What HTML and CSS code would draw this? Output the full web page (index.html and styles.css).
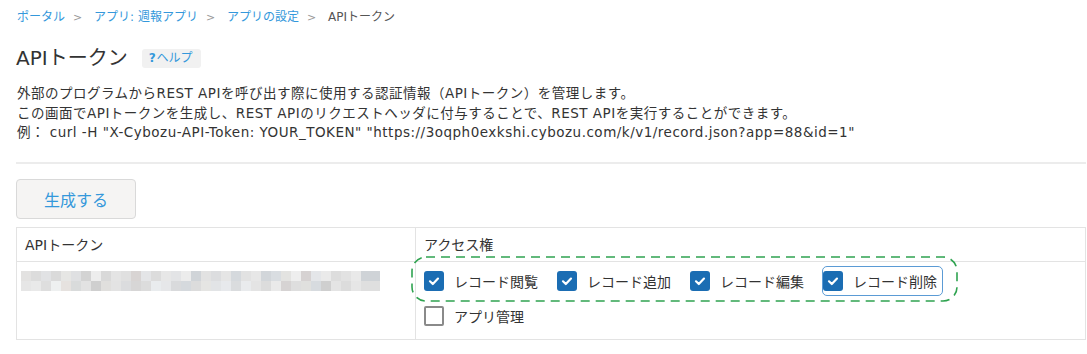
FILE: index.html
```html
<!DOCTYPE html>
<html lang="ja">
<head>
    <meta charset="UTF-8">
    <meta name="viewport" content="width=device-width, initial-scale=1.0">
    <title>APIトークン</title>
    <link rel="stylesheet" href="styles.css">
</head>
<body>
    <div class="page">
        <!-- Breadcrumb -->
        <nav class="breadcrumb">
            <a href="#">ポータル</a><span class="sep">&gt;</span>
            <a href="#">アプリ: 週報アプリ</a><span class="sep">&gt;</span>
            <a href="#">アプリの設定</a><span class="sep">&gt;</span>
            <span class="current">APIトークン</span>
        </nav>

        <div class="title-row">
            <h1>APIトークン</h1>
            <a href="#" class="help"><b>?</b>ヘルプ</a>
        </div>

        <p class="desc">
            外部のプログラムからREST APIを呼び出す際に使用する認証情報（APIトークン）を管理します。<br>
            この画面でAPIトークンを生成し、REST APIのリクエストヘッダに付与することで、REST APIを実行することができます。<br>
            例： curl -H "X-Cybozu-API-Token: YOUR_TOKEN" "https://3oqph0exkshi.cybozu.com/k/v1/record.json?app=88&amp;id=1"
        </p>

        <hr class="divider">

        <button type="button" class="btn">生成する</button>

        <table class="token-table">
            <thead>
                <tr>
                    <th class="col-token">APIトークン</th>
                    <th>アクセス権</th>
                </tr>
            </thead>
            <tbody>
                <tr>
                    <td class="token-cell"><div class="token-blur"></div></td>
                    <td class="perm-cell">
                        <div class="perm-row highlighted">
                            <svg class="dash-frame" width="547" height="46" viewBox="0 0 547 46">
                                <rect x="1" y="1" width="545" height="44" rx="14" ry="14" fill="none" stroke="#2fa350" stroke-width="1.6" stroke-dasharray="9 6"/>
                            </svg>
                            <label class="perm"><span class="check on"><svg viewBox="0 0 20 20"><path d="M6 10.3l2.8 2.7 5.2-5.4" fill="none" stroke="#fff" stroke-width="2.2" stroke-linecap="round" stroke-linejoin="round"/></svg></span>レコード閲覧</label>
                            <label class="perm"><span class="check on"><svg viewBox="0 0 20 20"><path d="M6 10.3l2.8 2.7 5.2-5.4" fill="none" stroke="#fff" stroke-width="2.2" stroke-linecap="round" stroke-linejoin="round"/></svg></span>レコード追加</label>
                            <label class="perm"><span class="check on"><svg viewBox="0 0 20 20"><path d="M6 10.3l2.8 2.7 5.2-5.4" fill="none" stroke="#fff" stroke-width="2.2" stroke-linecap="round" stroke-linejoin="round"/></svg></span>レコード編集</label>
                            <label class="perm focused"><span class="check on"><svg viewBox="0 0 20 20"><path d="M6 10.3l2.8 2.7 5.2-5.4" fill="none" stroke="#fff" stroke-width="2.2" stroke-linecap="round" stroke-linejoin="round"/></svg></span>レコード削除</label>
                        </div>
                        <div class="perm-row">
                            <label class="perm"><span class="check"></span>アプリ管理</label>
                        </div>
                    </td>
                </tr>
            </tbody>
        </table>
    </div>
</body>
</html>
```

FILE: styles.css
```css
body {
    font-family: "DejaVu Sans", "Noto Sans CJK JP", sans-serif;
    color: #333;
    background-color: #fff;
    margin: 0;
}

.page {
    padding: 8px 1px 0 16px;
}

a {
    color: #3498db;
    text-decoration: none;
}

/* Breadcrumb */
.breadcrumb {
    font-size: 12px;
    line-height: 18px;
    padding-left: 1px;
}

.breadcrumb .sep {
    color: #999;
    font-size: 11px;
    margin: 0 8px;
}

.breadcrumb .current {
    color: #555;
}

/* Title */
.title-row {
    display: flex;
    align-items: center;
    margin-top: 17px;
}

h1 {
    font-size: 20px;
    font-weight: normal;
    line-height: 28px;
    margin: 0;
}

.help {
    margin-left: 14px;
    background-color: #f1f1f1;
    border-radius: 3px;
    font-size: 12px;
    line-height: 19px;
    padding: 0 8px 0 7px;
}

.help b {
    margin-right: 1px;
}

.desc {
    font-size: 13.5px;
    letter-spacing: 0.5px;
    line-height: 19.5px;
    margin: 12px 0 0 1px;
}

.divider {
    border: none;
    height: 2px;
    background-color: #ececec;
    margin: 19px 0 0 0;
}

/* Button */
.btn {
    display: block;
    margin-top: 15px;
    width: 120px;
    height: 40px;
    background-color: #f5f4f3;
    border: 1px solid #d9d9d9;
    border-radius: 4px;
    color: #3498db;
    font-family: inherit;
    font-size: 16px;
    cursor: pointer;
}

/* Table */
.token-table {
    margin-top: 8px;
    width: 100%;
    border-collapse: collapse;
    border: 1px solid #e3e3e3;
}

.token-table th {
    font-size: 14px;
    font-weight: normal;
    text-align: left;
    height: 33px;
    padding: 0 8px;
    border: 1px solid #e3e3e3;
}

.token-table .col-token {
    width: 382px;
}

.token-table td {
    border: 1px solid #e3e3e3;
    vertical-align: top;
}

.token-cell {
    padding: 9px 0 0 4px;
}

.token-blur {
    width: 359px;
    height: 20px;
    background:
        linear-gradient(to right,
            #e3e2e1 0 10px, #dcdcdc 10px 20px, #e1e2e4 20px 30px, #dadada 30px 40px, #e6e6e4 40px 50px,
            #dfe0e2 50px 60px, #d3d3d3 60px 70px, #ededed 70px 80px, #d9d9d9 80px 90px, #e4e4e4 90px 100px,
            #e0e0e0 100px 110px, #d8d4d3 110px 120px, #e4e5e7 120px 130px, #dcdcdc 130px 140px, #e7e7e7 140px 150px,
            #e3e4e6 150px 160px, #ececec 160px 170px, #d0d4d8 170px 180px, #e2e2e2 180px 190px, #dcdddf 190px 200px,
            #e5e5e5 200px 210px, #d5d9dd 210px 220px, #e2e2e2 220px 230px, #e7e7e7 230px 240px, #d2d6da 240px 250px,
            #d9dde1 250px 260px, #e3e3e1 260px 270px, #eeeeee 270px 280px, #d6d2d2 280px 290px, #e4e6e9 290px 300px,
            #eaeaea 300px 310px, #dddddd 310px 320px, #e2e2e2 320px 330px, #e9e9e9 330px 340px, #cfd3d7 340px 359px) top / 100% 10px no-repeat,
        linear-gradient(to right,
            #e6e6e6 0 10px, #e9e9e9 10px 20px, #dedede 20px 30px, #eef0f0 30px 40px, #e6e2df 40px 50px,
            #d9dbdb 50px 60px, #e2e2e2 60px 70px, #cfcfcf 70px 80px, #e0dfdd 80px 90px, #e3e3e3 90px 100px,
            #dbdcde 100px 110px, #d7d6d6 110px 120px, #dcdcdc 120px 130px, #e9ecee 130px 140px, #e6e7e9 140px 150px,
            #d9dadc 150px 160px, #d5d9dd 160px 170px, #dcdcdc 170px 180px, #e5e5e3 180px 190px, #e2e4e6 190px 200px,
            #e7e9ec 200px 210px, #dadcde 210px 220px, #e9ebed 220px 230px, #e4e4e4 230px 240px, #dcdcdc 240px 250px,
            #eaeaea 250px 260px, #d6d3d3 260px 270px, #dedede 270px 280px, #e0e0de 280px 290px, #d7dbdf 290px 300px,
            #cfcfcf 300px 310px, #e4e4e4 310px 320px, #dcdcdc 320px 330px, #e6e6e6 330px 340px, #dfdfdf 340px 359px) bottom / 100% 10px no-repeat;
}

.perm-cell {
    padding: 4px 8px 8px 7px;
}

.perm-row {
    display: flex;
}

.perm-row + .perm-row {
    margin-top: 5px;
}

.perm-row.highlighted {
    position: relative;
    width: max-content;
}

/* green dashed annotation around the first row */
.dash-frame {
    position: absolute;
    left: -12px;
    top: -10px;
    pointer-events: none;
}

.perm {
    display: inline-flex;
    align-items: center;
    height: 28px;
    padding-right: 5px;
    border: 1px solid transparent;
    border-radius: 5px;
    font-size: 14px;
    margin-right: 12px;
}

.perm:last-child {
    margin-right: 0;
}

.perm.focused {
    border-color: #5b9bd5;
}

.check {
    box-sizing: border-box;
    width: 20px;
    height: 20px;
    margin-right: 10px;
    border: 2px solid #8a8a8a;
    border-radius: 2px;
    background-color: #fff;
}

.check.on {
    border: none;
    border-radius: 3px;
    background-color: #1b6db3;
}

.check svg {
    display: block;
    width: 20px;
    height: 20px;
}
```
